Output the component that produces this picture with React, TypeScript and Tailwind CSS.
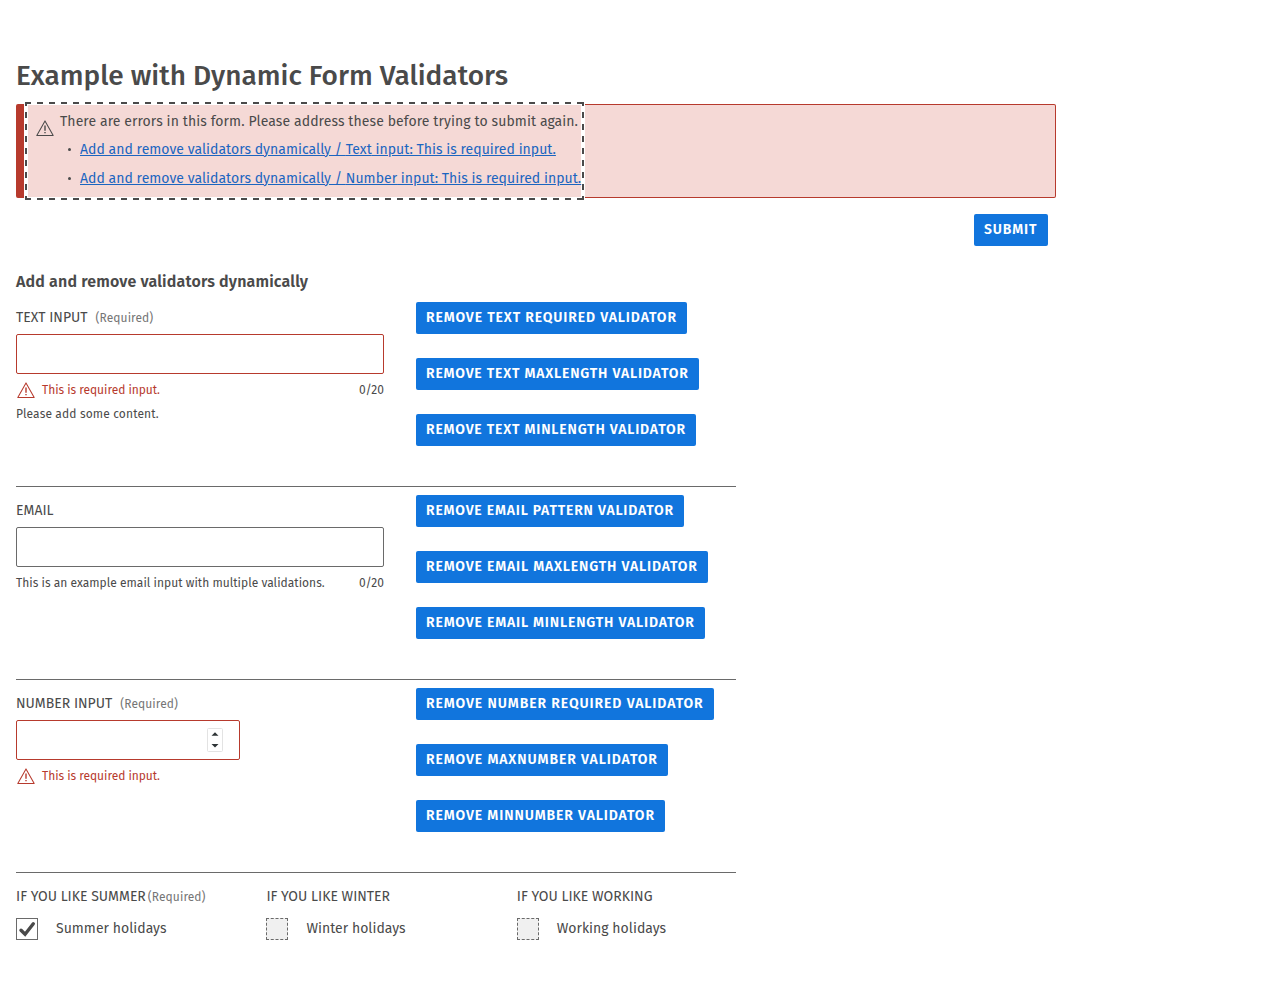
function WarningIcon({ className = '' }: { className?: string }) {
  return (
    <svg viewBox="0 0 18 16" className={`h-4 w-[18px] shrink-0 ${className}`} fill="none" stroke="currentColor" aria-hidden="true">
      <path d="M9 .9 17.2 15.4H.8Z" strokeWidth="1.05" strokeLinejoin="round" />
      <path d="M9 6v4.2" strokeWidth="1.4" strokeLinecap="round" />
      <path d="M9 12v1.2" strokeWidth="1.4" />
    </svg>
  )
}

function Button({ children, tracking = 'tracking-[0.8px]' }: { children: string; tracking?: string }) {
  return (
    <button className={`h-8 rounded-[2px] bg-[#1175dd] pr-[10.5px] pl-2.5 text-sm leading-8 font-semibold whitespace-nowrap text-white uppercase ${tracking}`}>
      {children}
    </button>
  )
}

type Action = { label: string; tracking?: string }

function ButtonStack({ actions }: { actions: Action[] }) {
  return (
    <div className="flex flex-col items-start gap-6">
      {actions.map(({ label, tracking }) => (
        <Button key={label} tracking={tracking}>
          {label}
        </Button>
      ))}
    </div>
  )
}

const textActions: Action[] = [
  { label: 'Remove text required validator', tracking: 'tracking-[0.86px]' },
  { label: 'Remove text maxlength validator' },
  { label: 'Remove text minlength validator' },
]

const emailActions: Action[] = [
  { label: 'Remove email pattern validator' },
  { label: 'Remove email maxlength validator', tracking: 'tracking-[0.83px]' },
  { label: 'Remove email minlength validator', tracking: 'tracking-[0.82px]' },
]

const numberActions: Action[] = [
  { label: 'Remove number required validator', tracking: 'tracking-[0.9px]' },
  { label: 'Remove maxnumber validator', tracking: 'tracking-[0.89px]' },
  { label: 'Remove minnumber validator', tracking: 'tracking-[0.88px]' },
]

function Label({ text, required, tight }: { text: string; required?: boolean; tight?: boolean }) {
  return (
    <div className={`flex h-8 items-baseline text-sm leading-8 whitespace-nowrap ${tight ? 'gap-0.5' : 'gap-2'}`}>
      <span>{text}</span>
      {required && <span className="text-xs leading-8 tracking-[0.08px] text-[#757575]">(Required)</span>}
    </div>
  )
}

function ErrorText() {
  return (
    <div className="flex items-center gap-[7px] pl-px text-[#b73a2d]">
      <WarningIcon />
      <span className="tracking-[-0.04px]">This is required input.</span>
    </div>
  )
}

function Holiday({ label, option, checked }: { label: string; option: string; checked?: boolean }) {
  return (
    <div className="w-[250.4px] shrink-0">
      <Label text={label} required={checked} tight />
      <div className="mt-[5px] flex h-[22px] items-center gap-[18px]">
        {checked ? (
          <span className="flex size-[22px] items-center justify-center border border-[#6a6a6a]">
            <svg viewBox="0 0 20 20" className="size-5" fill="none" stroke="#4a4a4a" strokeWidth="3.4" aria-hidden="true">
              <path d="M4 11.2 8.1 15.3 16.3 4.8" strokeLinecap="round" />
            </svg>
          </span>
        ) : (
          <span className="size-[22px] border border-dashed border-[#6a6a6a] bg-[#f0f0f0]" />
        )}
        <span className="text-sm leading-5 tracking-[0.03px]">{option}</span>
      </div>
    </div>
  )
}

export default function App() {
  return (
    <main className="min-h-[1001px] bg-white px-4 pt-[60px] font-['Fira_Sans','Noto_Sans',sans-serif] text-[#4a4a4a]">
      <h1 className="h-11 text-[28px] leading-8 font-medium">Example with Dynamic Form Validators</h1>

      <section className="h-[94px] w-[1040px] rounded-[2px] border border-l-8 border-[#b73a2d] bg-[#f5d9d6]">
        <div className="relative flex h-[92px] w-[557px] gap-1.5 pt-1 pl-3 text-sm">
          <svg className="absolute -top-[3px] left-0 h-[98px] w-[561px]" fill="none" aria-hidden="true">
            <rect x="2" y="1" width="557" height="96" stroke="#ffffff" strokeWidth="4" />
            <path d="M1 1h559M1 97h559" stroke="#4a4a4a" strokeWidth="2" strokeDasharray="6 6" />
            <path d="M2 0v98M559 0v98" stroke="#4a4a4a" strokeWidth="2" strokeDasharray="6 6" strokeDashoffset="2" />
          </svg>
          <WarningIcon className="relative -left-[0.5px] mt-[11px]" />
          <div className="relative whitespace-nowrap">
            <p className="mt-px h-[25px] leading-6 tracking-[0.095px]">
              There are errors in this form. Please address these before trying to submit again.
            </p>
            <ul className="pl-2 text-[#1b65c0]">
              {['Text', 'Number'].map((kind) => (
                <li key={kind} className="flex h-[29px] items-center gap-[9px] leading-6 tracking-[0.03px]">
                  <span className="size-[3px] rounded-full bg-[#4a4a4a]" />
                  <a href="#" className="underline">
                    Add and remove validators dynamically / {kind} input: This is required input.
                  </a>
                </li>
              ))}
            </ul>
          </div>
        </div>
      </section>

      <div className="mt-4 flex w-[1032px] justify-end">
        <Button tracking="tracking-[0.89px]">Submit</Button>
      </div>

      <h2 className="mt-6 h-8 text-base leading-6 font-semibold tracking-[0.155px]">Add and remove validators dynamically</h2>

      <div className="w-[720px]">
        <div className="flex h-[185px] border-b border-[#6a6a6a]">
          <div className="mr-8 w-[368px] text-xs">
            <Label text="TEXT INPUT" required />
            <div className="h-10 rounded-[2px] border border-[#b73a2d]" />
            <div className="mt-1 flex h-6 items-center justify-between">
              <ErrorText />
              <span>0/20</span>
            </div>
            <p className="leading-6 tracking-[0.13px]">Please add some content.</p>
          </div>
          <ButtonStack actions={textActions} />
        </div>

        <div className="flex h-[193px] border-b border-[#6a6a6a] pt-2">
          <div className="mr-8 w-[368px] text-xs">
            <Label text="EMAIL" />
            <div className="h-10 rounded-[2px] border border-[#6a6a6a]" />
            <div className="mt-1 flex h-6 items-center justify-between">
              <span className="tracking-[0.025px]">This is an example email input with multiple validations.</span>
              <span>0/20</span>
            </div>
          </div>
          <ButtonStack actions={emailActions} />
        </div>

        <div className="flex h-[193px] border-b border-[#6a6a6a] pt-2">
          <div className="mr-8 w-[368px] text-xs">
            <Label text="NUMBER INPUT" required />
            <div className="flex h-10 w-56 items-center justify-end rounded-[2px] border border-[#b73a2d] pr-4">
              <svg viewBox="0 0 16 24" className="h-6 w-4" aria-hidden="true">
                <rect x=".5" y=".5" width="15" height="23" rx="1" fill="#fff" stroke="#e3e3e3" />
                <path d="M4.5 7.8 8 4.2 11.5 7.8ZM4.5 16 8 19.6 11.5 16Z" fill="#2e3436" />
              </svg>
            </div>
            <div className="mt-1 flex h-6 items-center">
              <ErrorText />
            </div>
          </div>
          <ButtonStack actions={numberActions} />
        </div>

        <div className="flex pt-2">
          <Holiday label="IF YOU LIKE SUMMER" option="Summer holidays" checked />
          <Holiday label="IF YOU LIKE WINTER" option="Winter holidays" />
          <Holiday label="IF YOU LIKE WORKING" option="Working holidays" />
        </div>
      </div>
    </main>
  )
}
